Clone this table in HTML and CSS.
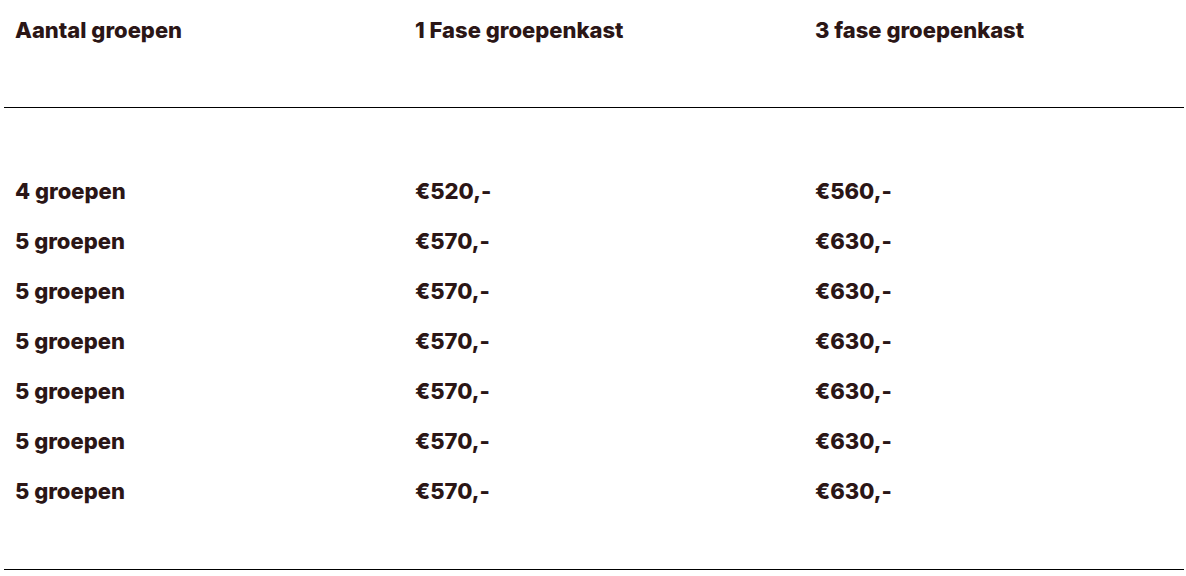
FILE: index.html
```html
<!DOCTYPE html>
<html>
<head>
<meta charset="utf-8">
<link rel="stylesheet" href="styles.css">
</head>
<body>
<div class="table">
  <div class="row head">
    <div class="cell">Aantal groepen</div>
    <div class="cell">1 Fase groepenkast</div>
    <div class="cell">3 fase groepenkast</div>
  </div>
  <div class="body">
    <div class="row"><div class="cell">4 groepen</div><div class="cell">€520,-</div><div class="cell">€560,-</div></div>
    <div class="row"><div class="cell">5 groepen</div><div class="cell">€570,-</div><div class="cell">€630,-</div></div>
    <div class="row"><div class="cell">5 groepen</div><div class="cell">€570,-</div><div class="cell">€630,-</div></div>
    <div class="row"><div class="cell">5 groepen</div><div class="cell">€570,-</div><div class="cell">€630,-</div></div>
    <div class="row"><div class="cell">5 groepen</div><div class="cell">€570,-</div><div class="cell">€630,-</div></div>
    <div class="row"><div class="cell">5 groepen</div><div class="cell">€570,-</div><div class="cell">€630,-</div></div>
    <div class="row"><div class="cell">5 groepen</div><div class="cell">€570,-</div><div class="cell">€630,-</div></div>
  </div>
</div>
</body>
</html>
```

FILE: styles.css
```css
html, body {
  margin: 0;
  padding: 0;
  background: #ffffff;
}
body {
  font-family: "Inter", "Liberation Sans", sans-serif;
  font-weight: 800;
  font-size: 22px;
  color: #2b1616;
}
.table {
  margin-left: 4px;
  width: 1180px;
}
.row {
  display: grid;
  grid-template-columns: 400px 400px 380px;
}
.cell {
  padding-left: 11px;
  line-height: 30px;
}
.head {
  height: 108px;
  padding-top: 15px;
  box-sizing: border-box;
  border-bottom: 1px solid #000;
}
.body {
  padding-top: 58px;
  padding-bottom: 53px;
  border-bottom: 1px solid #000;
}
.body .row {
  height: 50px;
  align-items: center;
}
```
